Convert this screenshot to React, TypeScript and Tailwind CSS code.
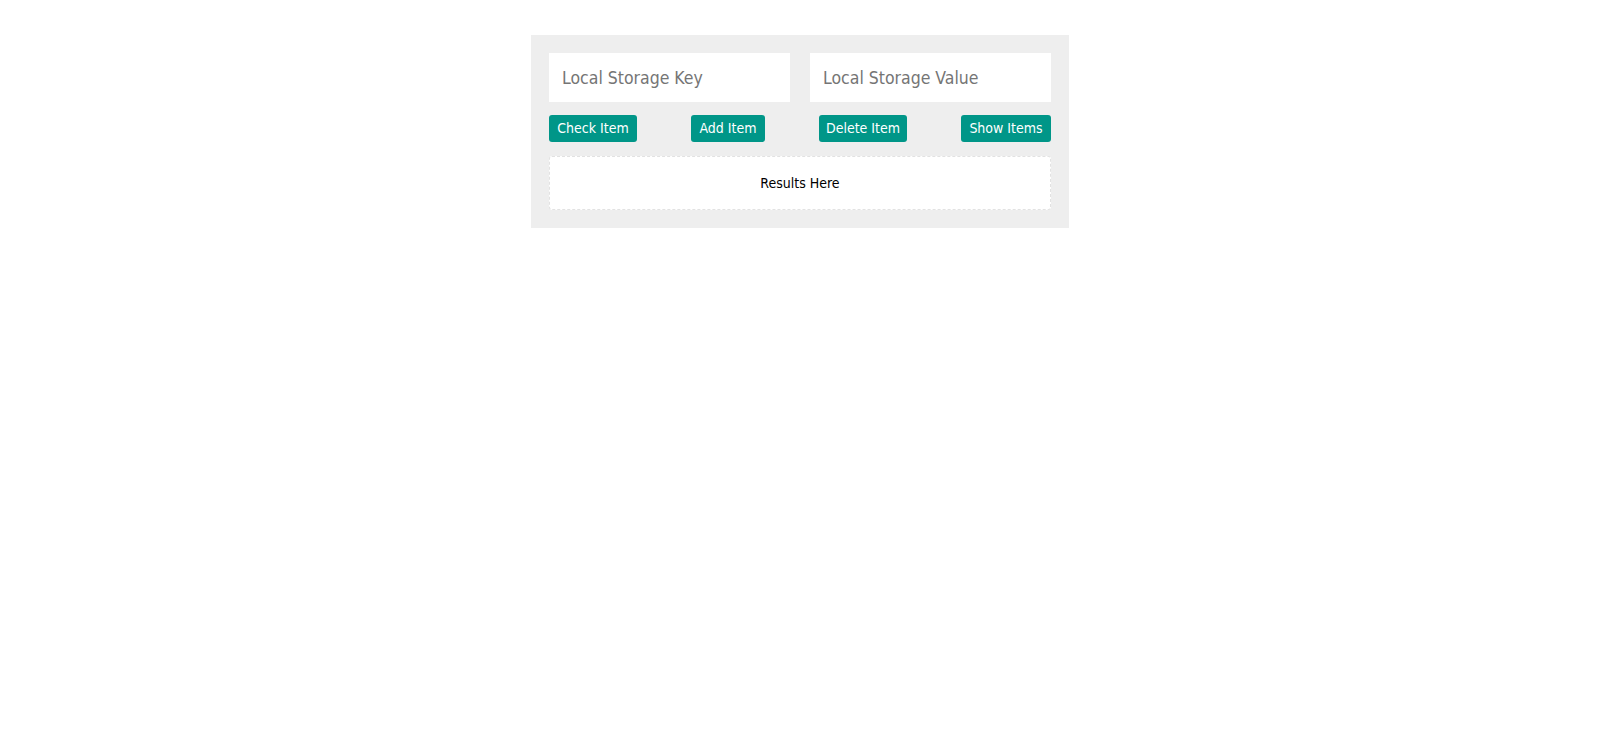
import React from "react";

const font = { fontFamily: '"DejaVu Sans Condensed", "DejaVu Sans", "Liberation Sans", sans-serif' };

export default function App() {
  const buttons: { label: string; w: string }[] = [
    { label: "Check Item", w: "w-[88px]" },
    { label: "Add Item", w: "w-[74px]" },
    { label: "Delete Item", w: "w-[88px]" },
    { label: "Show Items", w: "w-[90px]" },
  ];
  return (
    <div className="min-h-screen bg-white pt-[35px]" style={font}>
      <div className="mx-auto w-[538px] bg-[#eeeeee] p-[18px]">
        <div className="flex w-[502px] justify-between">
          <input
            placeholder="Local Storage Key"
            className="h-[49px] w-[241px] bg-white px-[13px] text-[17.5px] text-black outline-none placeholder:text-[#757575]"
          />
          <input
            placeholder="Local Storage Value"
            className="h-[49px] w-[241px] bg-white px-[13px] text-[17.5px] text-black outline-none placeholder:text-[#757575]"
          />
        </div>
        <div className="mt-[13px] flex w-[502px] justify-between">
          {buttons.map((b) => (
            <button
              key={b.label}
              className={`${b.w} h-[27px] rounded-[3px] bg-[#009688] text-center text-[14px] text-white`}
            >
              {b.label}
            </button>
          ))}
        </div>
        <div className="mt-[14px] flex h-[54px] w-[502px] items-center justify-center rounded-[3px] border border-dashed border-[#e2e2e2] bg-white text-[14px] text-black">
          Results Here
        </div>
      </div>
    </div>
  );
}
